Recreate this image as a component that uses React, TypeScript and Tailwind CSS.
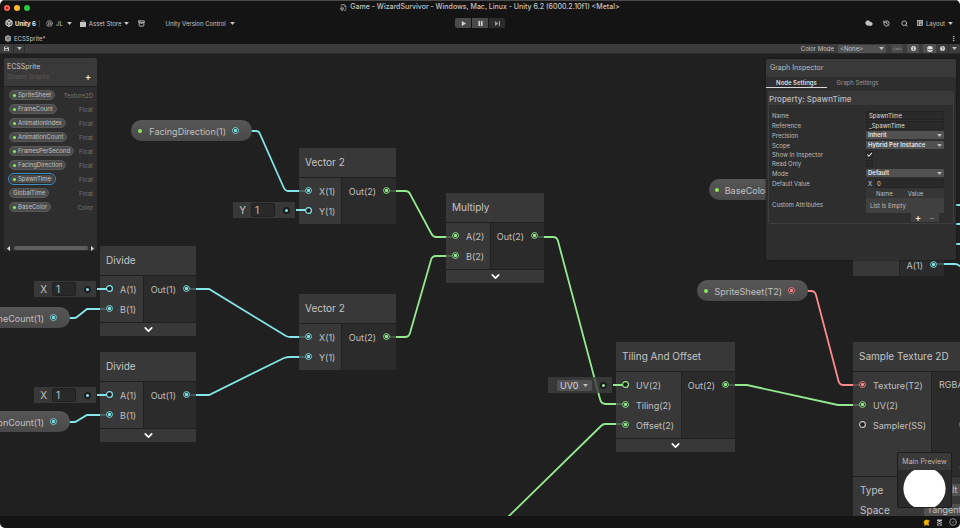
import type { ReactNode } from "react"
import {
  Archive,
  ChevronDown,
  CircleCheck,
  CircleUserRound,
  Cloud,
  EllipsisVertical,
  FileBox,
  History,
  Search,
} from "lucide-react"

const CYAN = "#84e4e7"
const GREEN = "#94e98f"
const RED = "#fb8b8b"

type Port = { label: string; color: string; open?: boolean }

// Graph wires, in canvas coordinates
const EDGES = [
  { color: CYAN, d: "M240 77H256Q259 77 260 80L283 132Q285 137 288 137H305" },
  { color: GREEN, d: "M390 137H405Q409 137 410 140L431 179Q433 183 436 183H452" },
  { color: GREEN, d: "M390 283H405Q409 283 410 279L431 206Q432 202 436 202H452" },
  { color: GREEN, d: "M538 183H553Q557 183 558 187L600 345Q601 350 606 350H622" },
  { color: GREEN, d: "M622 370H605Q603 370 601 372L508 463" },
  { color: GREEN, d: "M728 331H747L838 351H859" },
  { color: RED, d: "M796 237H811Q815 237 816 241L838 325Q839 331 843 331H859" },
  { color: CYAN, d: "M190 235H209L286 282Q288 283 290 283H305" },
  { color: CYAN, d: "M190 341H209L284 304Q287 303 290 303H305" },
  { color: CYAN, d: "M56 264H74Q76 264 77 263L87 255H106" },
  { color: CYAN, d: "M56 368H74Q76 368 77 367L87 361H106" },
  { color: CYAN, d: "M937 210H955Q958 210 961 213" },
  { color: CYAN, d: "M940 151H961M940 170H961M940 190H961" },
]

const PROPERTIES = [
  { name: "SpriteSheet", type: "Texture2D", exposed: true },
  { name: "FrameCount", type: "Float", exposed: true },
  { name: "AnimationIndex", type: "Float", exposed: true },
  { name: "AnimationCount", type: "Float", exposed: true },
  { name: "FramesPerSecond", type: "Float", exposed: true },
  { name: "FacingDirection", type: "Float", exposed: true },
  { name: "SpawnTime", type: "Float", exposed: true, selected: true },
  { name: "GlobalTime", type: "Float", exposed: false },
  { name: "BaseColor", type: "Color", exposed: true },
]

function Caret({ className = "" }: { className?: string }) {
  return (
    <svg viewBox="0 0 8 5" className={`h-[3px] w-[5px] shrink-0 ${className}`} fill="currentColor">
      <path d="M0 0h8L4 5z" />
    </svg>
  )
}

function PortDot({ color, open }: { color: string; open?: boolean }) {
  return (
    <svg viewBox="0 0 14 14" className="size-[7px] shrink-0">
      <circle cx="7" cy="7" r="5.800" fill="#1b1b1b" stroke={color} strokeWidth={open ? 2.4 : 2} />
      {!open && <circle cx="7" cy="7" r="3.300" fill={color} />}
    </svg>
  )
}

/* ---------- Top bars ---------- */

function TitleBar() {
  return (
    <header className="relative flex h-[14px] items-center justify-center border-t border-[#4a4a4a]">
      <div className="absolute left-[4px] flex gap-[4px]">
        <button aria-label="Close" className="flex size-[6px] items-center justify-center rounded-full bg-[#ff5f57]">
          <span className="size-[2px] rounded-full bg-[#7c1510]" />
        </button>
        <button aria-label="Minimize" className="size-[6px] rounded-full bg-[#febc2e]" />
        <button aria-label="Zoom" className="size-[6px] rounded-full bg-[#28c840]" />
      </div>
      <h1 className="flex items-center gap-[3px] text-[7px] font-medium text-[#c4c4c4]">
        <FileBox size={7} />
        Game - WizardSurvivor - Windows, Mac, Linux - Unity 6.2 (6000.2.10f1) &lt;Metal&gt;
      </h1>
    </header>
  )
}

function MainToolbar() {
  return (
    <div className="relative flex h-[18px] items-center justify-between pl-[5px] pr-[7px] text-[6px] text-[#c4c4c4]">
      <div className="flex items-center">
        <div className="flex items-center gap-[2px] font-bold text-[#ececec]">
          <svg viewBox="0 0 16 16" className="size-[8px]" fill="none" stroke="currentColor" strokeWidth="2">
            <path d="M8 1l6 3.500v7L8 15l-6-3.500v-7z" fill="#555" />
            <path d="M8 8v6M8 8L3 5M8 8l5-3" />
          </svg>
          Unity 6
        </div>
        <span className="mx-[3px] h-[7px] w-px bg-[#3a3a3a]" />
        <button className="ml-[3px] flex items-center gap-[3px]">
          <CircleUserRound size={7} />
          JL
          <Caret className="ml-px" />
        </button>
        <button className="ml-[8px] flex items-center gap-[3px]">
          <svg viewBox="0 0 12 14" className="h-[7px] w-[6px]" fill="currentColor">
            <path d="M0 4h3V3a3 3 0 0 1 6 0v1h3v10H0zM4.200 4h3.600V3a1.800 1.800 0 0 0-3.600 0z" />
          </svg>
          Asset Store
          <Caret />
        </button>
        <button aria-label="Package Manager" className="ml-[9px]">
          <Archive size={7} strokeWidth={3} />
        </button>
        <button className="ml-[20px] flex items-center gap-[4px]">
          Unity Version Control
          <Caret />
        </button>
      </div>

      <div className="absolute left-1/2 flex -translate-x-1/2 gap-px overflow-hidden rounded-[2px] text-[#d0d0d0]">
        <button aria-label="Play" className="flex h-[10px] w-[16px] items-center justify-center bg-[#4a4a4a]">
          <svg viewBox="0 0 6 6" className="size-[5px]" fill="currentColor"><path d="M1 0l5 3-5 3z" /></svg>
        </button>
        <button aria-label="Pause" className="flex h-[10px] w-[16px] items-center justify-center bg-[#4a4a4a]">
          <svg viewBox="0 0 6 6" className="size-[5px]" fill="currentColor"><path d="M.5 0h2v6h-2zM3.500 0h2v6h-2z" /></svg>
        </button>
        <button aria-label="Step" className="flex h-[10px] w-[16px] items-center justify-center bg-[#2c2c2c] text-[#9a9a9a]">
          <svg viewBox="0 0 6 6" className="size-[5px]" fill="currentColor"><path d="M0 0l4 3-4 3zM4.700 0H6v6H4.700z" /></svg>
        </button>
      </div>

      <div className="flex items-center">
        <button aria-label="Cloud"><Cloud size={8} fill="currentColor" /></button>
        <button aria-label="Undo History" className="ml-[10px]"><History size={7} strokeWidth={3} /></button>
        <button aria-label="Search" className="ml-[11px]"><Search size={7} strokeWidth={3} /></button>
        <button className="ml-[9px] flex items-center gap-[3px]">
          <svg viewBox="0 0 12 12" className="size-[6px]" fill="none" stroke="currentColor" strokeWidth="1.500">
            <rect x="1" y="1" width="10" height="10" fill="#555" />
            <path d="M5 1v10M8 1v5M5 6h6" />
          </svg>
          Layout
          <Caret />
        </button>
      </div>
    </div>
  )
}

function TabBar() {
  return (
    <div className="flex h-[12px] items-center justify-between pl-[5px] pr-[3px] text-[6px] text-[#c4c4c4]">
      <div className="flex items-center gap-[3px]">
        <svg viewBox="0 0 12 14" className="h-[7px] w-[6px]" fill="#9a9a9a">
          <path d="M6 0l6 3v8l-6 3-6-3V3z" />
          <path d="M3 5h6M3 8h6" stroke="#444" />
        </svg>
        ECSSprite*
      </div>
      <button aria-label="Tab menu"><EllipsisVertical size={7} strokeWidth={3} /></button>
    </div>
  )
}

function GraphToolbar() {
  return (
    <div className="flex h-[10px] items-center justify-between border-b border-[#2a2a2a] bg-[#3c3c3c] text-[6px] text-[#c0c0c0]">
      <div className="flex h-full items-stretch">
        <button aria-label="Save asset" className="flex w-[14px] items-center justify-center border-r border-[#2a2a2a]">
          <svg viewBox="0 0 10 10" className="size-[5px]">
            <path d="M0 1h8l2 2v7H0z" fill="#c4c4c4" />
            <path d="M2 1h5v3H2zM2 6h6v3H2z" fill="#4a4a4a" />
          </svg>
        </button>
        <button aria-label="Save options" className="flex w-[11px] items-center justify-center border-r border-[#2a2a2a]">
          <Caret />
        </button>
      </div>
      <div className="flex h-full items-center">
        <label htmlFor="color-mode">Color Mode</label>
        <div className="relative ml-[4px] flex items-center">
          <select id="color-mode" className="h-[8px] w-[48px] appearance-none rounded-[1px] bg-[#515151] pl-[2px] text-[6px] leading-[8px]">
            <option>&lt;None&gt;</option>
          </select>
          <Caret className="pointer-events-none absolute right-[2px]" />
        </div>
        <button aria-label="Precision" className="ml-[5px] flex h-full w-[12px] items-center justify-center bg-[#484848]">
          <svg viewBox="0 0 18 8" className="h-[4px] w-[9px]" fill="none" stroke="#8e8e8e" strokeWidth="1.500">
            <path d="M4 1L1 4l3 3M14 1l3 3-3 3" />
            <circle cx="7" cy="4" r="1.500" /><circle cx="11" cy="4" r="1.500" />
          </svg>
        </button>
        <button aria-label="Graph Inspector" className="ml-[4px] flex h-full w-[12px] items-center justify-center bg-[#505050]">
          <svg viewBox="0 0 10 10" className="size-[5px]">
            <circle cx="5" cy="5" r="5" fill="#d0d0d0" />
            <path d="M5 2v1.500M5 4.500V8" stroke="#444" strokeWidth="1.800" />
          </svg>
        </button>
        <button aria-label="Main Preview" className="ml-[4px] flex h-full w-[13px] items-center justify-center bg-[#505050]">
          <svg viewBox="0 0 12 12" className="size-[6px]">
            <circle cx="6" cy="6" r="6" fill="#dcdcdc" />
            <path d="M0 6q6 4 12 0" stroke="#444" strokeWidth="1.500" fill="none" />
          </svg>
        </button>
        <button aria-label="Help" className="flex h-full w-[12px] items-center justify-center">
          <svg viewBox="0 0 10 10" className="size-[5px]">
            <circle cx="5" cy="5" r="5" fill="#d0d0d0" />
            <path d="M3.500 4a1.500 1.500 0 1 1 1.500 1.600V6.500M5 7.300v1" stroke="#3c3c3c" fill="none" />
          </svg>
        </button>
        <button aria-label="More" className="flex h-full w-[12px] items-center justify-center border-l border-[#2a2a2a]">
          <Caret />
        </button>
      </div>
    </div>
  )
}

/* ---------- Graph pieces ---------- */

function InputPorts({ ports }: { ports: Port[] }) {
  return ports.map((port) => (
    <li key={port.label} className="flex h-[20px] items-center gap-[7px] whitespace-nowrap leading-[16px]">
      <PortDot color={port.color} open={port.open} />
      <span className="pt-[3px]">{port.label}</span>
    </li>
  ))
}

function Node({
  title,
  className,
  inputsClass,
  inputs,
  output,
  collapsible,
}: {
  title: string
  className: string
  inputsClass: string
  inputs: Port[]
  output: Port
  collapsible?: boolean
}) {
  return (
    <article className={`absolute flex flex-col gap-px text-[9px] text-[#c0c0c0] ${className}`}>
      <h2 className="h-[29px] truncate bg-[#3f3f3f]/80 pl-[6px] text-[10px] leading-[29px] text-[#c4c4c4]">{title}</h2>
      <div className="flex gap-px">
        <ul className={`bg-[#3f3f3f]/80 pb-[4px] pl-[6px] pt-[2px] ${inputsClass}`}>
          <InputPorts ports={inputs} />
        </ul>
        <div className="flex-1 bg-[#2e2e2e]/80 pr-[6px] pt-[2px]">
          <div className="flex h-[20px] items-center justify-end gap-[7px] leading-[16px]">
            <span className="pt-[3px]">{output.label}</span>
            <PortDot color={output.color} />
          </div>
        </div>
      </div>
      {collapsible && (
        <button aria-label="Collapse" className="flex h-[13px] items-center justify-center bg-[#3f3f3f]/80 text-white">
          <ChevronDown size={13} strokeWidth={3} />
        </button>
      )}
    </article>
  )
}

function PropertyPill({ label, color, className }: { label: string; color: string; className: string }) {
  return (
    <div
      className={`absolute flex h-[21px] items-center justify-end gap-[6px] rounded-full bg-linear-to-b from-[#575757] to-[#494949] pl-[7px] pr-[13px] text-[9px] text-[#c0c0c0] ${className}`}
    >
      <span className="mr-auto size-[4px] shrink-0 rounded-full bg-[#8ee85a]" />
      <span className="whitespace-nowrap pt-[3px] leading-[16px]">{label}</span>
      <PortDot color={color} />
    </div>
  )
}

// Inline default value that plugs into an unconnected input port
function SlotBox({ color, className, children }: { color: string; className: string; children: ReactNode }) {
  return (
    <div className={`absolute flex items-center text-[10px] text-[#c0c0c0] ${className}`}>
      <div className="flex h-[16px] flex-1 items-center justify-end bg-[#3f3f3f]/80 pr-[5px]">
        {children}
        <span className="flex size-[7px] items-center justify-center rounded-full bg-[#1b1b1b]">
          <span className="size-[3px] rounded-full" style={{ background: color }} />
        </span>
      </div>
      <span className="ml-px h-[2px] w-[10px]" style={{ background: color }} />
    </div>
  )
}

function FloatSlot({ axis, className }: { axis: string; className: string }) {
  return (
    <SlotBox color={CYAN} className={className}>
      <label className="flex items-center gap-[5px]">
        {axis}
        <input
          type="text"
          defaultValue="1"
          className="mr-[8px] h-[14px] w-[24px] rounded-[2px] border border-[#202020] bg-[#292929] pl-[3px] text-[10px] leading-[12px]"
        />
      </label>
    </SlotBox>
  )
}

function Blackboard() {
  return (
    <aside className="absolute left-[4px] top-[4px] flex h-[193px] w-[93px] flex-col rounded-[2px] bg-[#2e2e2e] text-[6px] text-[#c0c0c0]">
      <div className="flex h-[29px] flex-col rounded-t-[2px] border-b border-[#232323] bg-[#393939] pl-[3px] pr-[6px] pt-[3px]">
        <h2 className="text-[7px] leading-[11px] text-[#c8c8c8]">ECSSprite</h2>
        <div className="flex items-center justify-between leading-[10px] text-[#5a5a5a]">
          Shader Graphs
          <button aria-label="Add property" className="text-[9px] font-bold leading-[10px] text-[#e8e8e8]">+</button>
        </div>
      </div>
      <ul className="flex-1 pl-[5px] pr-[4px] pt-[1px]">
        {PROPERTIES.map((p) => (
          <li key={p.name} className="flex h-[14px] items-center justify-between">
            <span
              className={`flex h-[10px] items-center gap-[2px] rounded-full border bg-[#4c4c4c] px-[3px] leading-[8px] ${
                p.selected ? "border-[#2b2b2b] outline outline-[#3b8fc0]" : "border-[#585858]"
              }`}
            >
              {p.exposed && <span className="size-[3px] rounded-full bg-[#8ee85a]" />}
              {p.name}
            </span>
            <span className="text-[#747474]">{p.type}</span>
          </li>
        ))}
      </ul>
      <div className="flex h-[6px] items-center justify-between px-[2px] text-[#d8d8d8]">
        <Caret className="rotate-90" />
        <span className="h-[4px] w-[74px] rounded-full bg-[#5e5e5e]" />
        <Caret className="-rotate-90" />
      </div>
    </aside>
  )
}

function InspectorRow({ label, id, children }: { label: string; id: string; children: ReactNode }) {
  return (
    <div className="flex h-[10px] items-center">
      <label htmlFor={id} className="w-[94px] shrink-0">{label}</label>
      {children}
    </div>
  )
}

function InspectorText({ id, value }: { id: string; value: string }) {
  return (
    <input
      id={id}
      type="text"
      defaultValue={value}
      className="h-[9px] w-[78px] rounded-[1px] border border-[#232323] bg-[#2a2a2a] pl-[2px] text-[6px] leading-[7px] text-[#dcdcdc]"
    />
  )
}

function InspectorSelect({ id, value }: { id: string; value: string }) {
  return (
    <div className="relative flex items-center">
      <select
        id={id}
        className="h-[8px] w-[78px] appearance-none rounded-[1px] bg-[#515151] pl-[2px] text-[6px] font-semibold leading-[8px] text-[#e4e4e4]"
      >
        <option>{value}</option>
      </select>
      <Caret className="pointer-events-none absolute right-[2px]" />
    </div>
  )
}

function Inspector() {
  return (
    <aside className="absolute right-[4px] top-[5px] h-[201px] w-[190px] rounded-[2px] bg-[#2e2e2e] text-[6px] text-[#bcbcbc] shadow-[0_0_2px_#111]">
      <h2 className="h-[18px] rounded-t-[2px] bg-[#393939] pl-[4px] text-[7px] leading-[18px]">Graph Inspector</h2>
      <div role="tablist" className="flex h-[11px]">
        <button role="tab" aria-selected="true" className="w-[61px] border-b border-[#d8d8d8] font-semibold text-[#dcdcdc]">
          Node Settings
        </button>
        <button role="tab" aria-selected="false" className="w-[61px] text-[#969696]">Graph Settings</button>
      </div>
      <section className="mx-[2px] mt-[3px] rounded-[2px] border border-[#3e3e3e] pb-[1px]">
        <h3 className="mb-[5px] h-[13px] bg-[#393939] text-[8px] font-medium leading-[15px]">Property: SpawnTime</h3>
        <div className="pl-[3px]">
          <InspectorRow label="Name" id="name"><InspectorText id="name" value="SpawnTime" /></InspectorRow>
          <InspectorRow label="Reference" id="reference"><InspectorText id="reference" value="_SpawnTime" /></InspectorRow>
          <InspectorRow label="Precision" id="precision"><InspectorSelect id="precision" value="Inherit" /></InspectorRow>
          <InspectorRow label="Scope" id="scope"><InspectorSelect id="scope" value="Hybrid Per Instance" /></InspectorRow>
          <div className="flex h-[9px] items-center">
            <label htmlFor="show" className="w-[94px]">Show In Inspector</label>
            <span className="relative flex size-[7px]">
              <input id="show" type="checkbox" defaultChecked className="size-[7px] appearance-none border border-[#222] bg-[#292929]" />
              <svg viewBox="0 0 10 10" className="pointer-events-none absolute inset-0" fill="none" stroke="#e6e6e6" strokeWidth="1.600">
                <path d="M2 5l2 2.500L8.500 2.500" />
              </svg>
            </span>
          </div>
          <div className="flex h-[9px] items-center">
            <label htmlFor="readonly" className="w-[94px]">Read Only</label>
            <input id="readonly" type="checkbox" className="size-[7px] appearance-none border border-[#222] bg-[#292929]" />
          </div>
          <InspectorRow label="Mode" id="mode"><InspectorSelect id="mode" value="Default" /></InspectorRow>
          <InspectorRow label="Default Value" id="default-x">
            <span className="w-[9px] pl-[2px] text-[#d0d0d0]">X</span>
            <input
              id="default-x"
              type="text"
              defaultValue="0"
              className="h-[9px] w-[69px] rounded-[1px] border border-[#232323] bg-[#2a2a2a] pl-[1px] text-[6px] leading-[7px] text-[#dcdcdc]"
            />
          </InspectorRow>
          <div className="flex items-center">
            <span className="w-[94px] pt-[8px]">Custom Attributes</span>
            <div className="w-[78px]">
              <div className="flex h-[10px] items-center gap-[15px] bg-[#353535] pl-[10px]">
                <span>Name</span>
                <span>Value</span>
              </div>
              <div className="h-[15px] bg-[#404040] pl-[4px] leading-[15px]">List is Empty</div>
            </div>
          </div>
          <div className="ml-[139px] flex h-[9px] w-[28px] items-center justify-around bg-[#404040] text-[9px] leading-[9px]">
            <button aria-label="Add attribute" className="font-bold text-[#e8e8e8]">+</button>
            <button aria-label="Remove attribute" className="text-[#8c8c8c]">−</button>
          </div>
        </div>
      </section>
    </aside>
  )
}

function SampleTextureNode() {
  const inputs: Port[] = [
    { label: "Texture(T2)", color: RED },
    { label: "UV(2)", color: GREEN },
    { label: "Sampler(SS)", color: "#c4c4c4", open: true },
  ]
  const channels = ["RGBA(4)", "R(1)", "G(1)", "B(1)", "A(1)"]
  return (
    <article className="absolute left-[853px] top-[288px] flex w-[142px] flex-col gap-px text-[9px] text-[#c0c0c0]">
      <h2 className="h-[29px] bg-[#3f3f3f]/80 pl-[6px] text-[10px] leading-[29px] text-[#c4c4c4]">Sample Texture 2D</h2>
      <div className="flex h-[104px] gap-px">
        <ul className="w-[78px] bg-[#3f3f3f]/80 pl-[6px] pt-[2px]">
          <InputPorts ports={inputs} />
        </ul>
        <ul className="flex-1 bg-[#2e2e2e]/80 pr-[19px] pt-[2px] text-right">
          {channels.map((c) => (
            <li key={c} className="h-[20px] pt-[3px] leading-[16px]">{c}</li>
          ))}
        </ul>
      </div>
      <div className="flex h-[60px] flex-col bg-[#3f3f3f]/80 pl-[7px] pt-[3px] text-[10px]">
        <label className="flex h-[20px] items-center">
          <span className="w-[64px]">Type</span>
          <select className="h-[12px] w-[60px] appearance-none rounded-[2px] bg-[#515151] pl-[3px] text-[9px] leading-[12px]">
            <option>Default</option>
          </select>
        </label>
        <label className="flex h-[20px] items-center">
          <span className="w-[64px]">Space</span>
          <select className="h-[12px] w-[60px] appearance-none rounded-[2px] bg-[#515151] pl-[3px] text-[9px] leading-[12px]">
            <option>Tangent</option>
          </select>
        </label>
      </div>
    </article>
  )
}

function Canvas() {
  return (
    <main className="relative min-h-0 flex-1 overflow-hidden bg-[#202020]">
      <svg width="960" height="462" className="absolute left-0 top-0" fill="none" strokeWidth="1.800">
        {EDGES.map((e) => (
          <path key={e.d} d={e.d} stroke={e.color} />
        ))}
      </svg>

      <PropertyPill label="FacingDirection(1)" color={CYAN} className="left-[131px] top-[66px] w-[121px]" />
      <PropertyPill label="FrameCount(1)" color={CYAN} className="-left-[37px] top-[253px] w-[107px]" />
      <PropertyPill label="AnimationCount(1)" color={CYAN} className="-left-[55px] top-[357px] w-[125px]" />
      <PropertyPill label="SpriteSheet(T2)" color={RED} className="left-[697px] top-[226px] w-[111px]" />
      <PropertyPill label="BaseColor(4)" color={GREEN} className="left-[709px] top-[125px] w-[98px]" />

      <Node
        title="Divide"
        className="left-[100px] top-[192px] w-[96px]"
        inputsClass="w-[43px]"
        inputs={[{ label: "A(1)", color: CYAN, open: true }, { label: "B(1)", color: CYAN }]}
        output={{ label: "Out(1)", color: CYAN }}
        collapsible
      />
      <Node
        title="Divide"
        className="left-[100px] top-[298px] w-[96px]"
        inputsClass="w-[43px]"
        inputs={[{ label: "A(1)", color: CYAN, open: true }, { label: "B(1)", color: CYAN }]}
        output={{ label: "Out(1)", color: CYAN }}
        collapsible
      />
      <Node
        title="Vector 2"
        className="left-[299px] top-[94px] w-[97px]"
        inputsClass="w-[42px]"
        inputs={[{ label: "X(1)", color: CYAN }, { label: "Y(1)", color: CYAN, open: true }]}
        output={{ label: "Out(2)", color: GREEN }}
      />
      <Node
        title="Vector 2"
        className="left-[299px] top-[240px] w-[97px]"
        inputsClass="w-[42px]"
        inputs={[{ label: "X(1)", color: CYAN }, { label: "Y(1)", color: CYAN }]}
        output={{ label: "Out(2)", color: GREEN }}
      />
      <Node
        title="Multiply"
        className="left-[446px] top-[139px] w-[98px]"
        inputsClass="w-[44px]"
        inputs={[{ label: "A(2)", color: GREEN }, { label: "B(2)", color: GREEN }]}
        output={{ label: "Out(2)", color: GREEN }}
        collapsible
      />
      <Node
        title="Tiling And Offset"
        className="left-[616px] top-[288px] w-[119px]"
        inputsClass="w-[65px]"
        inputs={[
          { label: "UV(2)", color: GREEN, open: true },
          { label: "Tiling(2)", color: GREEN },
          { label: "Offset(2)", color: GREEN },
        ]}
        output={{ label: "Out(2)", color: GREEN }}
        collapsible
      />
      <SampleTextureNode />

      {/* Split node, mostly behind the inspector */}
      <article className="absolute left-[853px] top-[120px] flex h-[102px] w-[91px] gap-px text-[9px] text-[#c0c0c0]">
        <div className="w-[46px] bg-[#3f3f3f]/80" />
        <div className="flex flex-1 items-end justify-end bg-[#2e2e2e]/80 pb-[2px] pr-[7px]">
          <div className="flex h-[20px] items-center gap-[7px] leading-[16px]">
            <span className="pt-[3px]">A(1)</span>
            <PortDot color={CYAN} />
          </div>
        </div>
      </article>

      <FloatSlot axis="Y" className="left-[233px] top-[148px] w-[73px]" />
      <FloatSlot axis="X" className="left-[34px] top-[227px] w-[73px]" />
      <FloatSlot axis="X" className="left-[34px] top-[333px] w-[73px]" />
      <SlotBox color={GREEN} className="left-[548px] top-[323px] w-[75px]">
        <div className="relative mr-[8px] flex items-center">
          <select
            aria-label="UV channel"
            className="h-[11px] w-[35px] appearance-none rounded-[2px] bg-[#515151] pl-[3px] text-[9px] leading-[11px] text-[#d8d8d8]"
          >
            <option>UV0</option>
          </select>
          <Caret className="pointer-events-none absolute right-[4px]" />
        </div>
      </SlotBox>

      <Blackboard />
      <Inspector />

      <aside className="absolute bottom-[8px] right-[8px] w-[55px] overflow-hidden rounded-[2px] border border-[#1c1c1c] bg-[#2e2e2e]">
        <h2 className="h-[17px] bg-[#393939] text-center text-[7px] leading-[18px] text-[#bcbcbc]">Main Preview</h2>
        <svg viewBox="0 0 54 37" className="block h-[37px] w-full bg-[#2a2a2a]">
          <circle cx="27" cy="18.500" r="21.500" fill="#fff" />
        </svg>
      </aside>
    </main>
  )
}

function StatusBar() {
  return (
    <footer className="flex h-[12px] items-center justify-end gap-[6px] pr-[3px] text-[#c0c0c0]">
      <svg viewBox="0 0 14 14" className="size-[7px]" fill="#f0b400">
        <path d="M3 3l4-2 4 2 1-2 1 3-2 3 1 6H9l-1-2-2 2H2l1-4-2-2z" />
      </svg>
      <svg viewBox="0 0 14 14" className="size-[7px]" fill="currentColor">
        <path d="M2 1h10v3L7 6 2 4zM2 6l5 2 5-2v2l-5 2-5-2zM2 10l5 2 5-2v3H2z" />
      </svg>
      <CircleCheck size={8} />
    </footer>
  )
}

export default function App() {
  return (
    <div className="h-screen bg-white">
      <div className="flex h-full flex-col overflow-hidden rounded-[5px] bg-[#141414] font-['Inter',sans-serif]">
        <TitleBar />
        <MainToolbar />
        <TabBar />
        <GraphToolbar />
        <Canvas />
        <StatusBar />
      </div>
    </div>
  )
}
